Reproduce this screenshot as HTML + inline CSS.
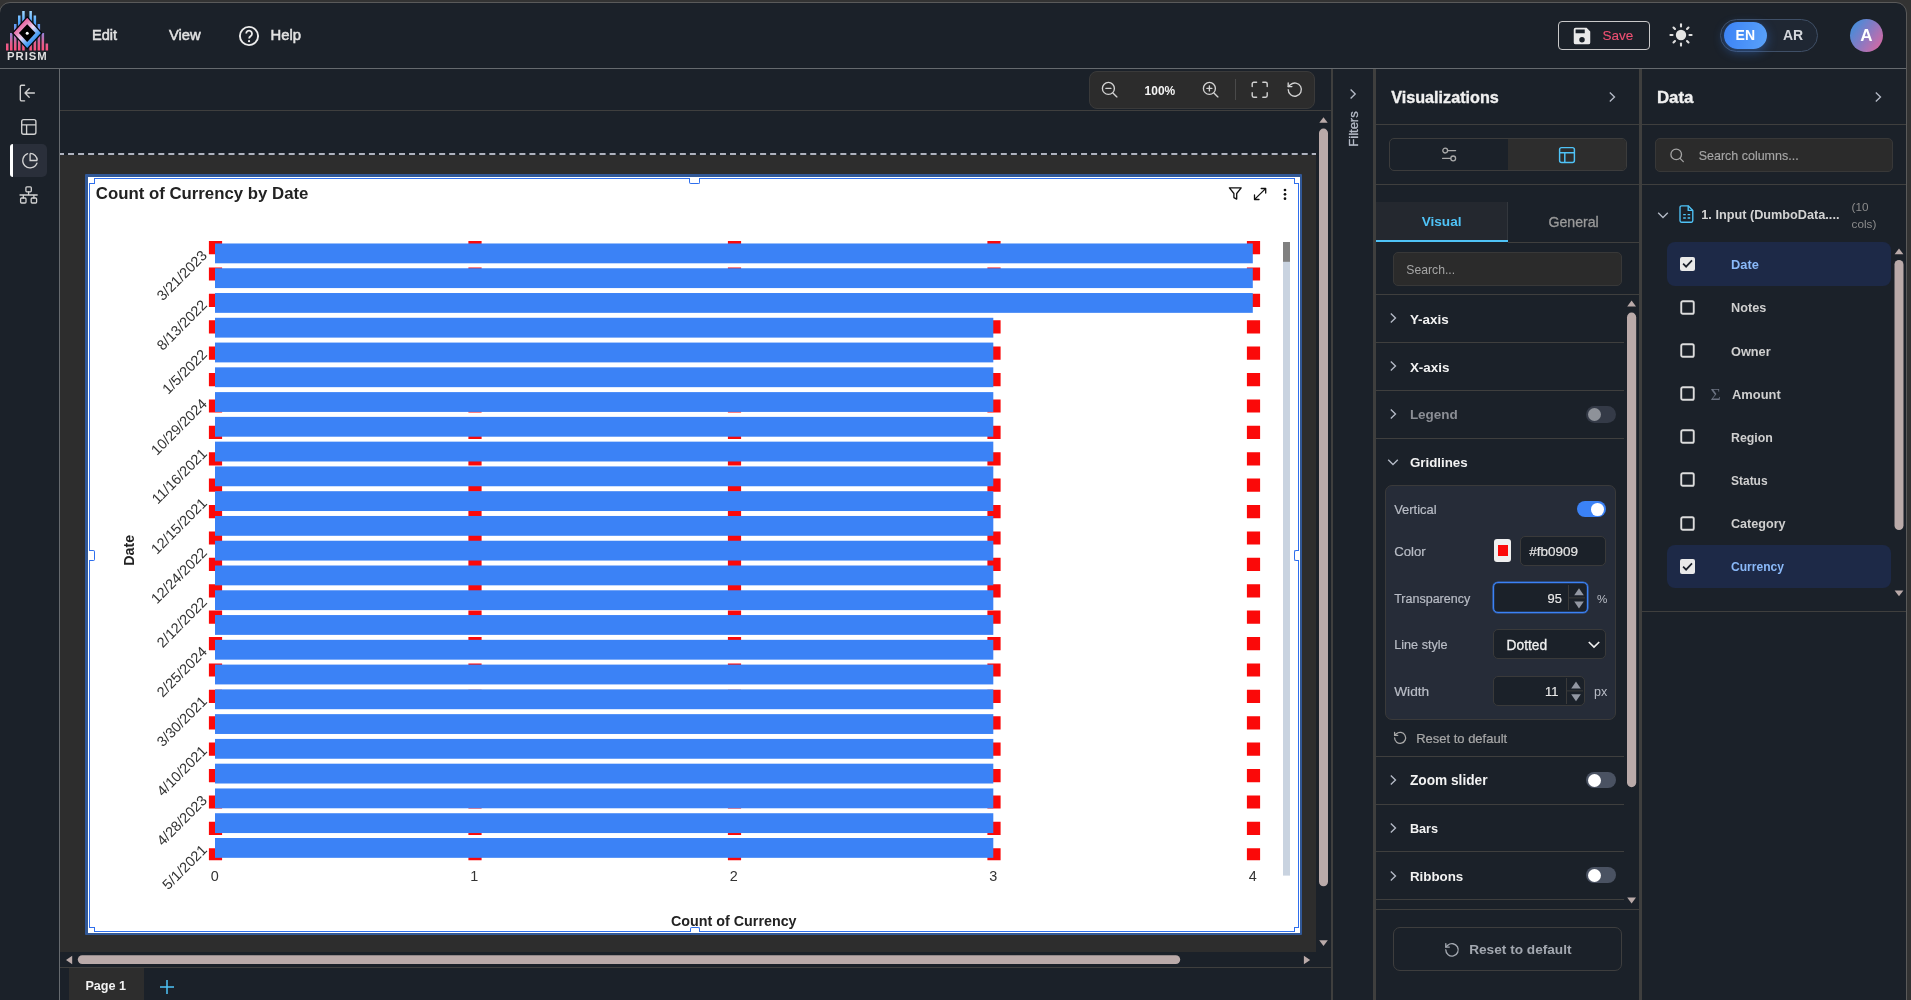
<!DOCTYPE html>
<html lang="en"><head><meta charset="utf-8"><title>PRISM - Report Designer</title>
<style>
html,body{margin:0;padding:0;}
body{width:1911px;height:1000px;overflow:hidden;background:#333;font-family:"Liberation Sans",sans-serif;position:relative;}
body div, body svg{position:absolute;box-sizing:border-box;}
.t{height:0;line-height:0;white-space:nowrap;}
svg{overflow:visible;}
</style></head><body>
<div id="app" style="left:0;top:0;width:1911px;height:1000px;will-change:transform;">

<div  style="left:-1px;top:2px;width:1908px;height:1012px;background:#1b2129;border:1px solid #5a5a5a;border-radius:11px;"></div>
<div  style="left:0px;top:68px;width:1906px;height:1px;background:#666a6e;"></div>
<svg style="left:0px;top:0px;" width="60" height="66" viewBox="0 0 60 66"><defs>
<linearGradient id="lgb" x1="0" y1="0" x2="0" y2="1" gradientUnits="userSpaceOnUse"><stop offset="0" stop-color="#a6dcff"/><stop offset="0" stop-color="#a6dcff"/></linearGradient>
<linearGradient id="lgbar" x1="0" y1="10" x2="0" y2="51" gradientUnits="userSpaceOnUse"><stop offset="0" stop-color="#a8dcff"/><stop offset="0.3" stop-color="#4da6ff"/><stop offset="0.55" stop-color="#8f85dd"/><stop offset="0.8" stop-color="#e0608f"/><stop offset="1" stop-color="#ff4f7b"/></linearGradient>
<linearGradient id="lgd" x1="19.5" y1="24.5" x2="34.8" y2="41" gradientUnits="userSpaceOnUse"><stop offset="0" stop-color="#e8609c"/><stop offset="0.2" stop-color="#e985b6"/><stop offset="0.5" stop-color="#ead8f6"/><stop offset="0.8" stop-color="#5ea8f6"/><stop offset="1" stop-color="#2f8ff0"/></linearGradient>
</defs><rect x="6" y="43.5" width="2.5" height="7.0" fill="url(#lgbar)"/><rect x="10" y="33" width="2.5" height="17.5" fill="url(#lgbar)"/><rect x="14" y="24" width="2.5" height="26.5" fill="url(#lgbar)"/><rect x="18" y="15.5" width="2.5" height="35.0" fill="url(#lgbar)"/><rect x="22.2" y="11" width="2.5" height="39.5" fill="url(#lgbar)"/><rect x="29.4" y="11" width="2.5" height="39.5" fill="url(#lgbar)"/><rect x="33.6" y="15.5" width="2.5" height="35.0" fill="url(#lgbar)"/><rect x="37.6" y="24" width="2.5" height="26.5" fill="url(#lgbar)"/><rect x="41.6" y="33" width="2.5" height="17.5" fill="url(#lgbar)"/><rect x="45.6" y="43.5" width="2.5" height="7.0" fill="url(#lgbar)"/><path d="M27.2 16.9 L41.8 33 L27.2 48.9 L12.6 33 Z" fill="url(#lgd)" stroke="#05070c" stroke-width="1.3"/><path d="M27.2 24.2 L35.5 33.1 L27.2 42.1 L18.9 33.1 Z" fill="#000"/><circle cx="27.2" cy="33.2" r="1.5" fill="#fff"/></svg>
<div class="t" style="left:7.2px;top:56px;font-size:10.8px;font-weight:700;color:#dedede;letter-spacing:0.9px;transform:scaleX(1.05);transform-origin:0 0;">PRISM</div>
<div class="t" style="left:92px;top:35px;font-size:14.57px;font-weight:400;color:#e2e2e2;-webkit-text-stroke:0.5px #e2e2e2;">Edit</div>
<div class="t" style="left:168.9px;top:35px;font-size:14.79px;font-weight:400;color:#e2e2e2;-webkit-text-stroke:0.5px #e2e2e2;">View</div>
<svg style="left:237px;top:24px;" width="24" height="24" viewBox="0 0 24 24"><circle cx="12" cy="12" r="9.1" fill="none" stroke="#ececec" stroke-width="1.9"/><path d="M9.2 9.6 a2.9 2.9 0 1 1 4.6 2.3 c-1 .7-1.7 1.3-1.7 2.6" fill="none" stroke="#ececec" stroke-width="1.8"/><circle cx="12.05" cy="17.2" r="1.1" fill="#ececec"/></svg>
<div class="t" style="left:270.5px;top:35px;font-size:14.83px;font-weight:400;color:#e2e2e2;-webkit-text-stroke:0.5px #e2e2e2;">Help</div>
<div  style="left:1558px;top:21px;width:92px;height:29px;border:1px solid #c9c9c9;border-radius:4px;"></div>
<svg style="left:1571px;top:25px;" width="22" height="22" viewBox="0 0 24 24"><path d="M17 3H5a2 2 0 0 0-2 2v14a2 2 0 0 0 2 2h14a2 2 0 0 0 2-2V7l-4-4zm-5 16a3 3 0 1 1 0-6 3 3 0 0 1 0 6zm3-10H5V5h10v4z" fill="#e9e9e9"/></svg>
<div class="t" style="left:1602.5px;top:36px;font-size:13.56px;font-weight:400;color:#f05073;-webkit-text-stroke:0.1px #f05073;">Save</div>
<svg style="left:1668.5px;top:23.4px;" width="24" height="24" viewBox="0 0 24 24"><circle cx="12" cy="12" r="5.2" fill="#e4e4e4"/><line x1="20.50" y1="12.00" x2="22.60" y2="12.00" stroke="#e0e0e0" stroke-width="2.1" stroke-linecap="round"/><line x1="18.01" y1="18.01" x2="19.50" y2="19.50" stroke="#e0e0e0" stroke-width="2.1" stroke-linecap="round"/><line x1="12.00" y1="20.50" x2="12.00" y2="22.60" stroke="#e0e0e0" stroke-width="2.1" stroke-linecap="round"/><line x1="5.99" y1="18.01" x2="4.50" y2="19.50" stroke="#e0e0e0" stroke-width="2.1" stroke-linecap="round"/><line x1="3.50" y1="12.00" x2="1.40" y2="12.00" stroke="#e0e0e0" stroke-width="2.1" stroke-linecap="round"/><line x1="5.99" y1="5.99" x2="4.50" y2="4.50" stroke="#e0e0e0" stroke-width="2.1" stroke-linecap="round"/><line x1="12.00" y1="3.50" x2="12.00" y2="1.40" stroke="#e0e0e0" stroke-width="2.1" stroke-linecap="round"/><line x1="18.01" y1="5.99" x2="19.50" y2="4.50" stroke="#e0e0e0" stroke-width="2.1" stroke-linecap="round"/></svg>
<div  style="left:1720px;top:19px;width:98px;height:33px;border:1px solid #3f4f66;border-radius:17px;background:#1f2733;"></div>
<div  style="left:1724px;top:22px;width:43px;height:27px;border-radius:14px;background:linear-gradient(100deg,#3b82f6,#5aa2f9);box-shadow:0 3px 11px 0 rgba(59,130,246,.42);"></div>
<div class="t" style="left:1745.3px;top:35px;font-size:14px;font-weight:700;color:#fff;transform:translateX(-50%);">EN</div>
<div class="t" style="left:1793px;top:35px;font-size:14px;font-weight:700;color:#d4d7dc;transform:translateX(-50%);">AR</div>
<div  style="left:1849.5px;top:18.8px;width:33.4px;height:33.4px;border-radius:50%;background:linear-gradient(125deg,#3f8fdc 8%,#8a79c2 50%,#d868a2 92%);"></div>
<div class="t" style="left:1866.4px;top:36px;font-size:17px;font-weight:700;color:#fff;transform:translateX(-50%);">A</div>
<div  style="left:59px;top:69px;width:1px;height:940px;background:#666a6e;"></div>
<svg style="left:17px;top:83px;" width="22" height="20" viewBox="0 0 22 20"><path d="M7.6 2.2H4.6a1.3 1.3 0 0 0-1.3 1.3v13a1.3 1.3 0 0 0 1.3 1.3h3" fill="none" stroke="#d2d2d2" stroke-width="1.35" stroke-linecap="round"/><path d="M17.4 10H8.2M12.2 5.8 8 10l4.2 4.2" fill="none" stroke="#d2d2d2" stroke-width="1.35" stroke-linecap="round" stroke-linejoin="round"/></svg>
<svg style="left:20px;top:118px;" width="18" height="18" viewBox="0 0 18 18"><rect x="1.7" y="1.6" width="14.2" height="14.6" rx="2" fill="none" stroke="#d2d2d2" stroke-width="1.35"/><path d="M1.7 6.8h14.2M6.6 6.8v9.4" fill="none" stroke="#d2d2d2" stroke-width="1.35"/></svg>
<div  style="left:10px;top:143.5px;width:36.7px;height:33.3px;background:#2a2f3a;border-radius:5px;"></div>
<div  style="left:10px;top:143.5px;width:3.4px;height:33.3px;background:#fff;border-radius:4px 0 0 4px;"></div>
<svg style="left:20px;top:150px;" width="20" height="20" viewBox="0 0 20 20"><path d="M10.1 3.4v7.1h7.1" fill="none" stroke="#d2d2d2" stroke-width="1.35"/><path d="M16.9 13.2A7.3 7.3 0 1 1 7.6 3.7" fill="none" stroke="#d2d2d2" stroke-width="1.35" stroke-linecap="round"/><path d="M10.1 3.4a7.1 7.1 0 0 1 7.1 7.1" fill="none" stroke="#d2d2d2" stroke-width="1.35"/></svg>
<svg style="left:18px;top:185px;" width="22" height="22" viewBox="0 0 22 22"><rect x="7.9" y="1.8" width="5.4" height="5" rx="1" fill="none" stroke="#d2d2d2" stroke-width="1.3"/><rect x="2.6" y="13" width="5.4" height="5" rx="1" fill="none" stroke="#d2d2d2" stroke-width="1.3"/><rect x="13.2" y="13" width="5.4" height="5" rx="1" fill="none" stroke="#d2d2d2" stroke-width="1.3"/><path d="M10.6 6.8v3.2M2 10h17.2M5.3 10v3M15.9 10v3" fill="none" stroke="#d2d2d2" stroke-width="1.3" stroke-linecap="round"/></svg>
<div  style="left:60px;top:110px;width:1271px;height:1px;background:#3f3f3e;"></div>
<div  style="left:1089px;top:71px;width:226px;height:38px;background:#2c2c2c;border:1px solid #3a3a3a;border-radius:8px;"></div>
<svg style="left:1100px;top:79.8px;" width="20" height="20" viewBox="0 0 20 20"><circle cx="8.4" cy="8.4" r="6" fill="none" stroke="#d2d2d2" stroke-width="1.35"/><path d="M12.9 12.9l4 4M5.9 8.4h5" stroke="#d2d2d2" stroke-width="1.35" stroke-linecap="round" fill="none"/></svg>
<div class="t" style="left:1144.6px;top:91px;font-size:11.96px;font-weight:700;color:#f4f4f4;">100%</div>
<svg style="left:1201px;top:79.8px;" width="20" height="20" viewBox="0 0 20 20"><circle cx="8.4" cy="8.4" r="6" fill="none" stroke="#d2d2d2" stroke-width="1.35"/><path d="M12.9 12.9l4 4M5.9 8.4h5M8.4 5.9v5" stroke="#d2d2d2" stroke-width="1.35" stroke-linecap="round" fill="none"/></svg>
<div  style="left:1235px;top:79px;width:1px;height:21px;background:#4a4a4a;"></div>
<svg style="left:1250px;top:80px;" width="20" height="20" viewBox="0 0 20 20"><path d="M2.2 6.6V3.8a1.6 1.6 0 0 1 1.6-1.6h2.8M12.8 2.2h2.8a1.6 1.6 0 0 1 1.6 1.6v2.8M17.2 12.8v2.8a1.6 1.6 0 0 1-1.6 1.6h-2.8M6.6 17.2H3.8a1.6 1.6 0 0 1-1.6-1.6v-2.8" fill="none" stroke="#d2d2d2" stroke-width="1.4" stroke-linecap="round"/></svg>
<svg style="left:1284.5px;top:80px;" width="20" height="20" viewBox="0 0 20 20"><path d="M3.2 9.6a6.6 6.6 0 1 0 2.2-4.9L3.2 6.6" fill="none" stroke="#d2d2d2" stroke-width="1.35" stroke-linecap="round" stroke-linejoin="round"/><path d="M3.2 2.9v3.7h3.7" fill="none" stroke="#d2d2d2" stroke-width="1.35" stroke-linecap="round" stroke-linejoin="round"/></svg>
<svg style="left:60px;top:153px;overflow:hidden;" width="1256" height="2" viewBox="0 0 1256 2"><line x1="-2" y1="1" x2="1262" y2="1" stroke="#aeb2be" stroke-width="2" stroke-dasharray="6 4.03"/></svg>
<div  style="left:60px;top:155px;width:1256px;height:797px;background:#2d2d2d;"></div>
<svg style="left:1316px;top:111px;" width="15" height="841" viewBox="0 0 15 841"><path d="M7.5 6.2l4.2 5.6H3.3z" fill="#baaaa9"/><rect x="3" y="17.6" width="9" height="757.6" rx="4.5" fill="#baaaa9"/><path d="M7.5 835l4.3-5.8H3.2z" fill="#baaaa9"/></svg>
<svg style="left:60px;top:952px;" width="1271" height="15" viewBox="0 0 1271 15"><path d="M6 8l6.2-4.3v8.6z" fill="#baaaa9"/><rect x="17.8" y="3.2" width="1102.4" height="8.8" rx="4.4" fill="#baaaa9"/><path d="M1250.2 8l-6.3-4.3v8.6z" fill="#baaaa9"/></svg>
<div  style="left:60px;top:967px;width:1271px;height:1px;background:#3f3f3e;"></div>
<div  style="left:69px;top:968px;width:75px;height:32px;background:#2d2d2d;"></div>
<div class="t" style="left:85.4px;top:986px;font-size:12.65px;font-weight:700;color:#f2f2f2;">Page 1</div>
<svg style="left:159px;top:979px;" width="16" height="16" viewBox="0 0 16 16"><path d="M8 1v14M1 8h14" stroke="#4fc3f7" stroke-width="1.5" fill="none"/></svg>
<div  style="left:1331px;top:69px;width:2px;height:940px;background:#3f3f3e;"></div>
<div  style="left:1373px;top:69px;width:3px;height:940px;background:#3f3f3e;"></div>
<div  style="left:1639px;top:69px;width:3px;height:940px;background:#3f3f3e;"></div>
<svg style="left:1346px;top:87px;" width="14" height="14" viewBox="0 0 14 14"><path d="M4.6 2.6l4.6 4.4-4.6 4.4" fill="none" stroke="#b4bac6" stroke-width="1.35"/></svg>
<div class="t" style="left:1354px;top:128.5px;font-size:12.97px;color:#b4bac6;transform:translate(-50%,0) rotate(-90deg);-webkit-text-stroke:.3px #b4bac6;">Filters</div>
<div  style="left:85.4px;top:174.3px;width:1217.1px;height:761.2px;background:#315897;border-radius:1px;"></div>
<div  style="left:88px;top:177px;width:1212.2px;height:756.2px;background:#fff;"></div>
<div  style="left:89px;top:178px;width:1210px;height:754px;border:1px solid #2f6fed;"></div>
<div  style="left:89px;top:178px;width:6px;height:6px;background:#fff;border-right:1px solid #2f6fed;border-bottom:1px solid #2f6fed;"></div>
<div  style="left:1294px;top:178px;width:5px;height:6px;background:#fff;border-left:1px solid #2f6fed;border-bottom:1px solid #2f6fed;"></div>
<div  style="left:89px;top:927px;width:6px;height:5px;background:#fff;border-right:1px solid #2f6fed;border-top:1px solid #2f6fed;"></div>
<div  style="left:1294px;top:927px;width:5px;height:5px;background:#fff;border-left:1px solid #2f6fed;border-top:1px solid #2f6fed;"></div>
<div  style="left:689.3px;top:178px;width:10.6px;height:6px;background:#fff;border:1px solid #2f6fed;border-top:none;border-radius:0 0 2px 2px;"></div>
<div  style="left:689.6px;top:927.3px;width:10.2px;height:4.7px;background:#fff;border:1px solid #2f6fed;border-bottom:none;border-radius:2px 2px 0 0;"></div>
<div  style="left:89px;top:550.4px;width:6px;height:10.2px;background:#fff;border:1px solid #2f6fed;border-left:none;border-radius:0 2px 2px 0;"></div>
<div  style="left:1294px;top:550.3px;width:5px;height:10.3px;background:#fff;border:1px solid #2f6fed;border-right:none;border-radius:2px 0 0 2px;"></div>
<svg style="left:0;top:0;font-family:'Liberation Sans',sans-serif" width="1320" height="960" viewBox="0 0 1320 960"><line x1="215.50" y1="241.0" x2="215.50" y2="860.3" stroke="#fb0909" stroke-width="13.2" stroke-dasharray="13.2 13.2"/><line x1="475.00" y1="241.0" x2="475.00" y2="860.3" stroke="#fb0909" stroke-width="13.2" stroke-dasharray="13.2 13.2"/><line x1="734.50" y1="241.0" x2="734.50" y2="860.3" stroke="#fb0909" stroke-width="13.2" stroke-dasharray="13.2 13.2"/><line x1="994.00" y1="241.0" x2="994.00" y2="860.3" stroke="#fb0909" stroke-width="13.2" stroke-dasharray="13.2 13.2"/><line x1="1253.50" y1="241.0" x2="1253.50" y2="860.3" stroke="#fb0909" stroke-width="13.2" stroke-dasharray="13.2 13.2"/><rect x="215" y="243.48" width="1037.80" height="19.82" fill="#3b82f6"/><rect x="215" y="268.25" width="1037.80" height="19.82" fill="#3b82f6"/><rect x="215" y="293.02" width="1037.80" height="19.82" fill="#3b82f6"/><rect x="215" y="317.79" width="778.30" height="19.82" fill="#3b82f6"/><rect x="215" y="342.57" width="778.30" height="19.82" fill="#3b82f6"/><rect x="215" y="367.34" width="778.30" height="19.82" fill="#3b82f6"/><rect x="215" y="392.11" width="778.30" height="19.82" fill="#3b82f6"/><rect x="215" y="416.88" width="778.30" height="19.82" fill="#3b82f6"/><rect x="215" y="441.65" width="778.30" height="19.82" fill="#3b82f6"/><rect x="215" y="466.43" width="778.30" height="19.82" fill="#3b82f6"/><rect x="215" y="491.20" width="778.30" height="19.82" fill="#3b82f6"/><rect x="215" y="515.97" width="778.30" height="19.82" fill="#3b82f6"/><rect x="215" y="540.74" width="778.30" height="19.82" fill="#3b82f6"/><rect x="215" y="565.51" width="778.30" height="19.82" fill="#3b82f6"/><rect x="215" y="590.29" width="778.30" height="19.82" fill="#3b82f6"/><rect x="215" y="615.06" width="778.30" height="19.82" fill="#3b82f6"/><rect x="215" y="639.83" width="778.30" height="19.82" fill="#3b82f6"/><rect x="215" y="664.60" width="778.30" height="19.82" fill="#3b82f6"/><rect x="215" y="689.37" width="778.30" height="19.82" fill="#3b82f6"/><rect x="215" y="714.15" width="778.30" height="19.82" fill="#3b82f6"/><rect x="215" y="738.92" width="778.30" height="19.82" fill="#3b82f6"/><rect x="215" y="763.69" width="778.30" height="19.82" fill="#3b82f6"/><rect x="215" y="788.46" width="778.30" height="19.82" fill="#3b82f6"/><rect x="215" y="813.23" width="778.30" height="19.82" fill="#3b82f6"/><rect x="215" y="838.01" width="778.30" height="19.82" fill="#3b82f6"/><text transform="translate(204.4 252.79) rotate(-45)" text-anchor="end" dominant-baseline="central" font-size="14.4" fill="#333">3/21/2023</text><text transform="translate(204.4 302.33) rotate(-45)" text-anchor="end" dominant-baseline="central" font-size="14.4" fill="#333">8/13/2022</text><text transform="translate(204.4 351.87) rotate(-45)" text-anchor="end" dominant-baseline="central" font-size="14.4" fill="#333">1/5/2022</text><text transform="translate(204.4 401.42) rotate(-45)" text-anchor="end" dominant-baseline="central" font-size="14.4" fill="#333">10/29/2024</text><text transform="translate(204.4 450.96) rotate(-45)" text-anchor="end" dominant-baseline="central" font-size="14.4" fill="#333">11/16/2021</text><text transform="translate(204.4 500.51) rotate(-45)" text-anchor="end" dominant-baseline="central" font-size="14.4" fill="#333">12/15/2021</text><text transform="translate(204.4 550.05) rotate(-45)" text-anchor="end" dominant-baseline="central" font-size="14.4" fill="#333">12/24/2022</text><text transform="translate(204.4 599.59) rotate(-45)" text-anchor="end" dominant-baseline="central" font-size="14.4" fill="#333">2/12/2022</text><text transform="translate(204.4 649.14) rotate(-45)" text-anchor="end" dominant-baseline="central" font-size="14.4" fill="#333">2/25/2024</text><text transform="translate(204.4 698.68) rotate(-45)" text-anchor="end" dominant-baseline="central" font-size="14.4" fill="#333">3/30/2021</text><text transform="translate(204.4 748.23) rotate(-45)" text-anchor="end" dominant-baseline="central" font-size="14.4" fill="#333">4/10/2021</text><text transform="translate(204.4 797.77) rotate(-45)" text-anchor="end" dominant-baseline="central" font-size="14.4" fill="#333">4/28/2023</text><text transform="translate(204.4 847.31) rotate(-45)" text-anchor="end" dominant-baseline="central" font-size="14.4" fill="#333">5/1/2021</text><text x="214.80" y="881" text-anchor="middle" font-size="14.4" fill="#333">0</text><text x="474.30" y="881" text-anchor="middle" font-size="14.4" fill="#333">1</text><text x="733.80" y="881" text-anchor="middle" font-size="14.4" fill="#333">2</text><text x="993.30" y="881" text-anchor="middle" font-size="14.4" fill="#333">3</text><text x="1252.80" y="881" text-anchor="middle" font-size="14.4" fill="#333">4</text><text x="733.8" y="925.7" text-anchor="middle" font-size="14.3" font-weight="700" fill="#222">Count of Currency</text><text transform="translate(134.2 550.3) rotate(-90)" text-anchor="middle" font-size="14.3" font-weight="700" fill="#222">Date</text><text x="95.8" y="198.8" font-size="16.8" font-weight="700" fill="#222">Count of Currency by Date</text><rect x="1283" y="242" width="7" height="633.6" fill="#c9d3e0"/><rect x="1283" y="242" width="7" height="19.8" fill="#808080"/><path d="M1229.4 187.8h11.8l-4.5 5.7v5.6l-2.8-1.5v-4.1z" fill="none" stroke="#111" stroke-width="1.3" stroke-linejoin="round"/><path d="M1254.6 199.4l11-10.8M1261.2 188.5h4.5v4.5M1259 199.5h-4.5v-4.5" fill="none" stroke="#111" stroke-width="1.3" stroke-linecap="round" stroke-linejoin="round"/><circle cx="1285" cy="190" r="1.35" fill="#111"/><circle cx="1285" cy="194.3" r="1.35" fill="#111"/><circle cx="1285" cy="198.7" r="1.35" fill="#111"/></svg>
<div class="t" style="left:1391.2px;top:97px;font-size:16.2px;font-weight:700;color:#f0f0f0;-webkit-text-stroke:0.35px #f0f0f0;">Visualizations</div>
<svg style="left:1605px;top:89.5px;" width="14" height="14" viewBox="0 0 14 14"><path d="M4.8 2.4l4.7 4.6-4.7 4.6" fill="none" stroke="#b4bac6" stroke-width="1.35"/></svg>
<div  style="left:1376px;top:124px;width:264px;height:1px;background:#3f3f3e;"></div>
<div  style="left:1389px;top:138px;width:238px;height:33px;border:1px solid #3c3c3c;border-radius:5px;overflow:hidden;"><div style="left:118px;top:0;width:120px;height:33px;background:#2d2d2d;"></div></div>
<svg style="left:1439px;top:145px;" width="20" height="20" viewBox="0 0 20 20"><circle cx="6.2" cy="5.6" r="2.4" fill="none" stroke="#a9a9a9" stroke-width="1.3"/><path d="M8.6 5.6h8" stroke="#a9a9a9" stroke-width="1.3" fill="none" stroke-linecap="round"/><circle cx="14.2" cy="13.4" r="2.4" fill="none" stroke="#a9a9a9" stroke-width="1.3"/><path d="M3.6 13.4h8" stroke="#a9a9a9" stroke-width="1.3" fill="none" stroke-linecap="round"/></svg>
<svg style="left:1557.5px;top:145.5px;" width="18" height="18" viewBox="0 0 18 18"><rect x="1.6" y="1.6" width="14.8" height="14.8" rx="2" fill="none" stroke="#4fc3f7" stroke-width="1.45"/><path d="M1.6 6.8h14.8M6.8 6.8v9.6" fill="none" stroke="#4fc3f7" stroke-width="1.45"/></svg>
<div  style="left:1376px;top:184px;width:264px;height:1px;background:#3f3f3e;"></div>
<div  style="left:1376px;top:202px;width:131.5px;height:38px;background:#24282f;"></div>
<div  style="left:1507px;top:202px;width:1px;height:38px;background:#33373d;"></div>
<div  style="left:1376px;top:240px;width:131.5px;height:2.4px;background:#4fc3f7;"></div>
<div  style="left:1507.5px;top:241.6px;width:132.5px;height:1px;background:#3f3f3e;"></div>
<div class="t" style="left:1441.6px;top:222px;font-size:13.6px;font-weight:700;color:#4fc3f7;transform:translateX(-50%);">Visual</div>
<div class="t" style="left:1573.6px;top:222px;font-size:14.17px;font-weight:400;color:#9a9a9a;transform:translateX(-50%);-webkit-text-stroke:0.3px #9a9a9a;">General</div>
<div  style="left:1393px;top:252px;width:229px;height:34px;background:#2b2b2b;border:1px solid #383838;border-radius:5px;"></div>
<div class="t" style="left:1406.3px;top:270px;font-size:12.2px;font-weight:400;color:#a5a5a5;">Search...</div>
<div  style="left:1376px;top:294px;width:264px;height:1px;background:#3f3f3e;"></div>
<svg style="left:1624px;top:295px;" width="16" height="615" viewBox="0 0 16 615"><path d="M7.6 5.6l4.4 6H3.2z" fill="#baaaa9"/><rect x="3" y="17.6" width="9.2" height="474.6" rx="4.6" fill="#baaaa9"/><path d="M7.6 608.4l4.4-6H3.2z" fill="#baaaa9"/></svg>
<svg style="left:1386.2px;top:311.4px;" width="14" height="14" viewBox="0 0 14 14"><path d="M4.8 2.4l4.7 4.6-4.7 4.6" fill="none" stroke="#b4bac6" stroke-width="1.35"/></svg>
<div class="t" style="left:1409.9px;top:320px;font-size:13.45px;font-weight:700;color:#f2f2f2;">Y-axis</div>
<svg style="left:1386.2px;top:359.4px;" width="14" height="14" viewBox="0 0 14 14"><path d="M4.8 2.4l4.7 4.6-4.7 4.6" fill="none" stroke="#b4bac6" stroke-width="1.35"/></svg>
<div class="t" style="left:1409.9px;top:368px;font-size:13.41px;font-weight:700;color:#f2f2f2;">X-axis</div>
<div  style="left:1376px;top:342px;width:248px;height:1px;background:#3f3f3e;"></div>
<svg style="left:1386.2px;top:407.4px;" width="14" height="14" viewBox="0 0 14 14"><path d="M4.8 2.4l4.7 4.6-4.7 4.6" fill="none" stroke="#b4bac6" stroke-width="1.35"/></svg>
<div class="t" style="left:1409.9px;top:415px;font-size:13.47px;font-weight:700;color:#8b8e95;">Legend</div>
<div  style="left:1586px;top:406.2px;width:30.4px;height:16.8px;background:#343a47;border-radius:9px;"></div>
<div  style="left:1588.2px;top:408.1px;width:13px;height:13px;background:#8e9299;border-radius:50%;"></div>
<div  style="left:1376px;top:390px;width:248px;height:1px;background:#3f3f3e;"></div>
<svg style="left:1386.2px;top:455.4px;" width="14" height="14" viewBox="0 0 14 14"><path d="M2.2 4.8l4.8 4.7 4.8-4.7" fill="none" stroke="#b4bac6" stroke-width="1.35"/></svg>
<div class="t" style="left:1409.9px;top:463px;font-size:13.33px;font-weight:700;color:#f2f2f2;">Gridlines</div>
<div  style="left:1376px;top:438px;width:248px;height:1px;background:#3f3f3e;"></div>
<div  style="left:1385px;top:485.3px;width:231px;height:234.4px;background:#262c38;border:1px solid #3a3a3a;border-radius:7px;"></div>
<div class="t" style="left:1394.2px;top:510px;font-size:12.93px;font-weight:400;color:#b9bdc6;-webkit-text-stroke:0.2px #b9bdc6;">Vertical</div>
<div  style="left:1577px;top:501px;width:28.8px;height:16.4px;background:#3b82f6;border-radius:9px;"></div>
<div  style="left:1591.4px;top:502.8px;width:12.8px;height:12.8px;background:#fff;border-radius:50%;"></div>
<div class="t" style="left:1394.2px;top:552px;font-size:13.18px;font-weight:400;color:#b9bdc6;-webkit-text-stroke:0.2px #b9bdc6;">Color</div>
<div  style="left:1494px;top:539.2px;width:17.2px;height:23px;background:#efefef;border-radius:3px;"></div>
<div  style="left:1498.2px;top:544.6px;width:9.4px;height:11.6px;background:#fb0909;"></div>
<div  style="left:1520.4px;top:536.3px;width:85.4px;height:29.3px;background:#1b2129;border:1px solid #3a3a3a;border-radius:5px;"></div>
<div class="t" style="left:1529.2px;top:552px;font-size:13.5px;font-weight:400;color:#e4e4e4;-webkit-text-stroke:0.2px #e4e4e4;">#fb0909</div>
<div class="t" style="left:1394.2px;top:599px;font-size:12.51px;font-weight:400;color:#b9bdc6;-webkit-text-stroke:0.2px #b9bdc6;">Transparency</div>
<div  style="left:1493.2px;top:582.2px;width:94.8px;height:30.8px;background:#1b2129;border:1px solid #3b82f6;border-radius:5px;box-shadow:0 0 0 .6px rgba(59,130,246,.75), inset 0 0 0 .4px rgba(59,130,246,.5);"></div>
<div class="t" style="left:1561.8px;top:599px;font-size:12.86px;font-weight:400;color:#e8e8e8;transform:translateX(-100%);-webkit-text-stroke:0.2px #e8e8e8;">95</div>
<div  style="left:1568px;top:585px;width:1px;height:25px;background:#3a3a3a;"></div>
<svg style="left:1573px;top:586px;" width="12" height="24" viewBox="0 0 12 24"><path d="M6 2.2l4.8 7H1.2z" fill="#9297a2"/><path d="M6 22.4l4.8-7H1.2z" fill="#9297a2"/><path d="M-5 11.9h17" stroke="#3a3a3a" stroke-width="1"/></svg>
<div class="t" style="left:1596.9px;top:599px;font-size:11.6px;font-weight:400;color:#b9bdc6;">%</div>
<div class="t" style="left:1394.2px;top:645px;font-size:12.66px;font-weight:400;color:#b9bdc6;-webkit-text-stroke:0.2px #b9bdc6;">Line style</div>
<div  style="left:1493.2px;top:629.2px;width:112.6px;height:29.6px;background:#1b2129;border:1px solid #3a3a3a;border-radius:5px;"></div>
<div class="t" style="left:1506.6px;top:646px;font-size:13.75px;font-weight:400;color:#f0f0f0;-webkit-text-stroke:0.3px #f0f0f0;">Dotted</div>
<svg style="left:1586.5px;top:637.7px;" width="14" height="14" viewBox="0 0 14 14"><path d="M1.8 4l5.2 5 5.2-5" fill="none" stroke="#f0f0f0" stroke-width="1.7"/></svg>
<div class="t" style="left:1394.2px;top:692px;font-size:13.69px;font-weight:400;color:#b9bdc6;-webkit-text-stroke:0.2px #b9bdc6;">Width</div>
<div  style="left:1493.2px;top:676.2px;width:91.6px;height:29.4px;background:#1b2129;border:1px solid #3a3a3a;border-radius:5px;"></div>
<div class="t" style="left:1558.4px;top:692px;font-size:12.86px;font-weight:400;color:#e8e8e8;transform:translateX(-100%);-webkit-text-stroke:0.2px #e8e8e8;">11</div>
<div  style="left:1566px;top:678px;width:1px;height:26px;background:#3a3a3a;"></div>
<svg style="left:1570.3px;top:679px;" width="12" height="24" viewBox="0 0 12 24"><path d="M6 2.4l4.8 7H1.2z" fill="#9297a2"/><path d="M6 22.2l4.8-7H1.2z" fill="#9297a2"/><path d="M-4 11.9h17" stroke="#3a3a3a" stroke-width="1"/></svg>
<div class="t" style="left:1594px;top:692px;font-size:12.6px;font-weight:400;color:#b9bdc6;">px</div>
<svg style="left:1392px;top:729.5px;" width="16" height="16" viewBox="0 0 16 16"><path d="M2.6 7.8a5.5 5.5 0 1 0 1.8-4L2.6 5.4" fill="none" stroke="#a8a8a8" stroke-width="1.25" stroke-linecap="round" stroke-linejoin="round"/><path d="M2.6 2.3v3.1h3.1" fill="none" stroke="#a8a8a8" stroke-width="1.25" stroke-linecap="round" stroke-linejoin="round"/></svg>
<div class="t" style="left:1416.2px;top:739px;font-size:12.99px;font-weight:400;color:#a8a8a8;-webkit-text-stroke:0.2px #a8a8a8;">Reset to default</div>
<div  style="left:1376px;top:756px;width:248px;height:1px;background:#3f3f3e;"></div>
<svg style="left:1386.2px;top:773.3px;" width="14" height="14" viewBox="0 0 14 14"><path d="M4.8 2.4l4.7 4.6-4.7 4.6" fill="none" stroke="#b4bac6" stroke-width="1.35"/></svg>
<div class="t" style="left:1409.9px;top:781px;font-size:13.71px;font-weight:700;color:#f2f2f2;">Zoom slider</div>
<div  style="left:1586px;top:771.7px;width:30.4px;height:16.8px;background:#4a5262;border-radius:9px;"></div>
<div  style="left:1588.2px;top:773.6px;width:13px;height:13px;background:#fff;border-radius:50%;"></div>
<div  style="left:1376px;top:804.3px;width:248px;height:1px;background:#3f3f3e;"></div>
<svg style="left:1386.2px;top:821.4px;" width="14" height="14" viewBox="0 0 14 14"><path d="M4.8 2.4l4.7 4.6-4.7 4.6" fill="none" stroke="#b4bac6" stroke-width="1.35"/></svg>
<div class="t" style="left:1409.9px;top:829px;font-size:12.7px;font-weight:700;color:#f2f2f2;">Bars</div>
<div  style="left:1376px;top:851px;width:248px;height:1px;background:#3f3f3e;"></div>
<svg style="left:1386.2px;top:868.9px;" width="14" height="14" viewBox="0 0 14 14"><path d="M4.8 2.4l4.7 4.6-4.7 4.6" fill="none" stroke="#b4bac6" stroke-width="1.35"/></svg>
<div class="t" style="left:1409.9px;top:877px;font-size:13.35px;font-weight:700;color:#f2f2f2;">Ribbons</div>
<div  style="left:1586px;top:866.7px;width:30.4px;height:16.8px;background:#4a5262;border-radius:9px;"></div>
<div  style="left:1588.2px;top:868.6px;width:13px;height:13px;background:#fff;border-radius:50%;"></div>
<div  style="left:1376px;top:899px;width:248px;height:1px;background:#3f3f3e;"></div>
<div  style="left:1376px;top:909px;width:264px;height:1px;background:#3f3f3e;"></div>
<div  style="left:1393px;top:927px;width:229px;height:44px;border:1px solid #3e3e3e;border-radius:7px;"></div>
<svg style="left:1443.4px;top:941px;" width="18" height="18" viewBox="0 0 18 18"><path d="M2.8 8.8a6.2 6.2 0 1 0 2-4.5L2.8 6.1" fill="none" stroke="#a3a8b0" stroke-width="1.35" stroke-linecap="round" stroke-linejoin="round"/><path d="M2.8 2.6v3.5h3.5" fill="none" stroke="#a3a8b0" stroke-width="1.35" stroke-linecap="round" stroke-linejoin="round"/></svg>
<div class="t" style="left:1469.2px;top:950px;font-size:13.65px;font-weight:700;color:#a3a8b0;">Reset to default</div>
<div class="t" style="left:1656.9px;top:98px;font-size:16.9px;font-weight:700;color:#f0f0f0;-webkit-text-stroke:0.35px #f0f0f0;">Data</div>
<svg style="left:1871px;top:89.5px;" width="14" height="14" viewBox="0 0 14 14"><path d="M4.8 2.4l4.7 4.6-4.7 4.6" fill="none" stroke="#b4bac6" stroke-width="1.35"/></svg>
<div  style="left:1642px;top:124px;width:264px;height:1px;background:#3f3f3e;"></div>
<div  style="left:1655px;top:138px;width:238px;height:34px;background:#2b2b2b;border:1px solid #383838;border-radius:5px;"></div>
<svg style="left:1668px;top:146px;" width="18" height="18" viewBox="0 0 18 18"><circle cx="8.2" cy="8.4" r="5.3" fill="none" stroke="#a5a5a5" stroke-width="1.3"/><path d="M12.1 12.4l3.2 3.2" stroke="#a5a5a5" stroke-width="1.3" stroke-linecap="round"/></svg>
<div class="t" style="left:1698.7px;top:156px;font-size:12.49px;font-weight:400;color:#a5a5a5;-webkit-text-stroke:0.15px #a5a5a5;">Search columns...</div>
<div  style="left:1642px;top:184px;width:264px;height:1px;background:#3f3f3e;"></div>
<svg style="left:1655.8px;top:207.6px;" width="14" height="14" viewBox="0 0 14 14"><path d="M2.2 4.8l4.8 4.7 4.8-4.7" fill="none" stroke="#b4bac6" stroke-width="1.35"/></svg>
<svg style="left:1677.7px;top:204px;" width="18" height="20" viewBox="0 0 18 20"><path d="M3.6 1.8h6.6l4.6 4.6v10.2a1.6 1.6 0 0 1-1.6 1.6H3.6A1.6 1.6 0 0 1 2 16.6V3.4a1.6 1.6 0 0 1 1.6-1.6z" fill="none" stroke="#4fc3f7" stroke-width="1.35" stroke-linejoin="round"/><path d="M10.2 1.8v4.6h4.6" fill="none" stroke="#4fc3f7" stroke-width="1.35" stroke-linejoin="round"/><path d="M5.2 10.6h2.6M9.6 10.6h2.6M5.2 14h2.6M9.6 14h2.6" stroke="#4fc3f7" stroke-width="1.4"/></svg>
<div class="t" style="left:1701.3px;top:215px;font-size:12.69px;font-weight:700;color:#d4d4d4;">1. Input (DumboData....</div>
<div class="t" style="left:1851.6px;top:207px;font-size:11.7px;font-weight:400;color:#8c8c8c;">(10</div>
<div class="t" style="left:1851.6px;top:224px;font-size:11.7px;font-weight:400;color:#8c8c8c;">cols)</div>
<div  style="left:1667px;top:242.0px;width:224.3px;height:43.6px;background:#1d2947;border-radius:8px;"></div>
<div  style="left:1680.2px;top:256.5px;width:14.6px;height:14.6px;background:#e9e9e9;border-radius:2px;"></div>
<svg style="left:1680px;top:256.3px;" width="15" height="15" viewBox="0 0 15 15"><path d="M3.1 7.6l3 3.1 5.9-6.3" fill="none" stroke="#1a1f2a" stroke-width="1.7"/></svg>
<div class="t" style="left:1731px;top:265px;font-size:12.83px;font-weight:700;color:#8ab9f9;">Date</div>
<svg style="left:1680px;top:300.0px;" width="15" height="15" viewBox="0 0 15 15"><rect x="1.25" y="1.25" width="12.5" height="12.5" rx="1.6" fill="none" stroke="#dcdcdc" stroke-width="1.9"/></svg>
<div class="t" style="left:1731px;top:308px;font-size:12.7px;font-weight:700;color:#cfcfcf;">Notes</div>
<svg style="left:1680px;top:343.0px;" width="15" height="15" viewBox="0 0 15 15"><rect x="1.25" y="1.25" width="12.5" height="12.5" rx="1.6" fill="none" stroke="#dcdcdc" stroke-width="1.9"/></svg>
<div class="t" style="left:1731px;top:352px;font-size:12.76px;font-weight:700;color:#cfcfcf;">Owner</div>
<svg style="left:1680px;top:386.2px;" width="15" height="15" viewBox="0 0 15 15"><rect x="1.25" y="1.25" width="12.5" height="12.5" rx="1.6" fill="none" stroke="#dcdcdc" stroke-width="1.9"/></svg>
<div class="t" style="left:1732px;top:395px;font-size:12.92px;font-weight:700;color:#cfcfcf;">Amount</div>
<div class="t" style="left:1710.6px;top:394px;font-size:17.5px;color:#6b7280;font-family:'Liberation Serif',serif;">&#931;</div>
<svg style="left:1680px;top:429.2px;" width="15" height="15" viewBox="0 0 15 15"><rect x="1.25" y="1.25" width="12.5" height="12.5" rx="1.6" fill="none" stroke="#dcdcdc" stroke-width="1.9"/></svg>
<div class="t" style="left:1731px;top:438px;font-size:12.36px;font-weight:700;color:#cfcfcf;">Region</div>
<svg style="left:1680px;top:472.3px;" width="15" height="15" viewBox="0 0 15 15"><rect x="1.25" y="1.25" width="12.5" height="12.5" rx="1.6" fill="none" stroke="#dcdcdc" stroke-width="1.9"/></svg>
<div class="t" style="left:1731px;top:481px;font-size:11.98px;font-weight:700;color:#cfcfcf;">Status</div>
<svg style="left:1680px;top:515.8px;" width="15" height="15" viewBox="0 0 15 15"><rect x="1.25" y="1.25" width="12.5" height="12.5" rx="1.6" fill="none" stroke="#dcdcdc" stroke-width="1.9"/></svg>
<div class="t" style="left:1731px;top:524px;font-size:12.6px;font-weight:700;color:#cfcfcf;">Category</div>
<div  style="left:1667px;top:544.6px;width:224.3px;height:43.6px;background:#1d2947;border-radius:8px;"></div>
<div  style="left:1680.2px;top:559.1px;width:14.6px;height:14.6px;background:#e9e9e9;border-radius:2px;"></div>
<svg style="left:1680px;top:558.9px;" width="15" height="15" viewBox="0 0 15 15"><path d="M3.1 7.6l3 3.1 5.9-6.3" fill="none" stroke="#1a1f2a" stroke-width="1.7"/></svg>
<div class="t" style="left:1731px;top:567px;font-size:12.07px;font-weight:700;color:#8ab9f9;">Currency</div>
<svg style="left:1890.5px;top:243px;" width="16" height="360" viewBox="0 0 16 360"><path d="M8 5.6l4.4 5.6H3.6z" fill="#baaaa9"/><rect x="3.5" y="17" width="9" height="270" rx="4.5" fill="#baaaa9"/><path d="M8 353.2l4.4-5.8H3.6z" fill="#baaaa9"/></svg>
<div  style="left:1642px;top:611px;width:264px;height:1px;background:#3f3f3e;"></div>
</div></body></html>
